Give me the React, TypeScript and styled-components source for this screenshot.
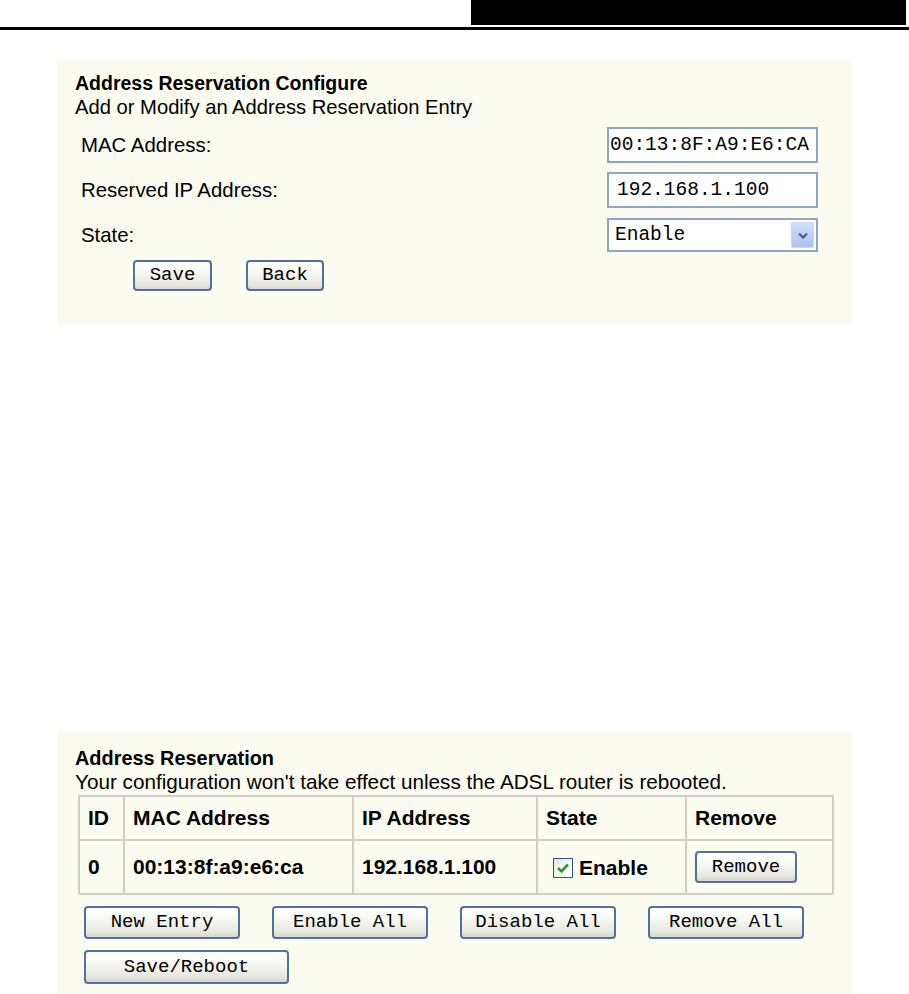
import React from "react";
import styled, { createGlobalStyle } from "styled-components";

const GlobalStyle = createGlobalStyle`
  html, body { margin: 0; padding: 0; background: #ffffff; }
  body { font-family: "Liberation Sans", Arial, sans-serif; color: #000; }
  * { box-sizing: border-box; }
`;

const CREAM = "#fbfcef";

const Header = styled.header`
  display: flex;
  justify-content: flex-end;
  height: 25px;
`;

const BlackTab = styled.div`
  width: 435px;
  margin-right: 3px;
  background: #000;
`;

const Rule = styled.div`
  height: 3px;
  margin-top: 2px;
  background: #000;
`;

const Page = styled.main`
  padding-left: 57px;
`;

const Panel = styled.section<{ $top: number; $height: number; $padTop: number }>`
  margin-top: ${(p) => p.$top}px;
  width: 795px;
  height: ${(p) => p.$height}px;
  background: ${CREAM};
  padding: ${(p) => p.$padTop}px 25px 0 18px;
`;

const Title = styled.div<{ $size?: number }>`
  font-weight: bold;
  font-size: ${(p) => p.$size ?? 19.5}px;
  line-height: 24px;
`;

const Subtitle = styled.div<{ $size?: number }>`
  font-size: ${(p) => p.$size ?? 20.2}px;
  line-height: 24px;
`;

const FormGrid = styled.div`
  display: grid;
  grid-template-columns: 1fr 211px;
  grid-auto-rows: 36px;
  row-gap: 9px;
  margin: 8px 9px 0 0;
  padding-left: 6px;
  align-items: center;
`;

const Label = styled.div`
  font-size: 20.4px;
  line-height: 24px;
`;

const TextField = styled.div<{ $pad?: number }>`
  height: 36px;
  border: 2px solid #8ca6c6;
  background: #fff;
  font-family: "Liberation Mono", "Courier New", monospace;
  font-size: 19.5px;
  line-height: 32px;
  padding-left: ${(p) => p.$pad ?? 1}px;
  white-space: nowrap;
  overflow: hidden;
`;

const SelectBox = styled.div`
  height: 34px;
  border: 2px solid #8ca6c6;
  background: #fff;
  display: flex;
  align-items: center;
  justify-content: space-between;
  padding: 0 2px 0 6px;
  font-family: "Liberation Mono", "Courier New", monospace;
  font-size: 19.5px;
`;

const ArrowBtn = styled.div`
  width: 23px;
  height: 26px;
  border-radius: 2px;
  background: linear-gradient(180deg, #d4e0fb 0%, #bccef7 55%, #aec3f2 100%);
  border: 1px solid #c6d5f8;
  display: flex;
  align-items: center;
  justify-content: center;
`;

const ButtonRow = styled.div<{ $left: number; $gap: number; $top: number }>`
  display: flex;
  gap: ${(p) => p.$gap}px;
  padding-left: ${(p) => p.$left}px;
  margin-top: ${(p) => p.$top}px;
`;

const XPButton = styled.button<{ $w: number; $h?: number }>`
  width: ${(p) => p.$w}px;
  height: ${(p) => p.$h ?? 32}px;
  border: 2px solid #50709f;
  border-radius: 4px;
  background: linear-gradient(180deg, #ffffff 0%, #f6f6f1 45%, #e6e5dc 85%, #d6d5ca 100%);
  font-family: "Liberation Mono", "Courier New", monospace;
  font-size: 19px;
  color: #000;
  padding: 0;
  line-height: 1;
`;

const Table = styled.table`
  margin-top: 1px;
  margin-left: 3px;
  width: 754px;
  border-collapse: collapse;
  table-layout: fixed;
  border-top: 2px solid #d9d9d0;
  border-left: 2px solid #d9d9d0;
  border-right: 2px solid #a9a9a2;
  border-bottom: 2px solid #a9a9a2;
`;

const Cell = styled.td<{ $h: number }>`
  height: ${(p) => p.$h}px;
  border: 2px solid #cfcfc6;
  padding: 0 0 0 8px;
  font-size: 21px;
  font-weight: bold;
  vertical-align: middle;
  white-space: nowrap;
`;

const CheckWrap = styled.span`
  display: inline-flex;
  align-items: center;
  gap: 6px;
  padding-left: 7px;
`;

const CheckBox = styled.span`
  width: 20px;
  height: 20px;
  border: 1px solid #2a5290;
  background: linear-gradient(135deg, #e4e4dc 0%, #ffffff 70%);
  display: inline-flex;
  align-items: center;
  justify-content: center;
`;

const Rows = styled.div`
  display: flex;
  flex-direction: column;
  gap: 11px;
  margin-top: 11px;
`;

export default function App() {
  const cols = [45, 229, 184, 149, 147];
  return (
    <>
      <GlobalStyle />
      <Header>
        <BlackTab />
      </Header>
      <Rule />
      <Page>
        <Panel $top={29} $height={265} $padTop={12}>
          <Title>Address Reservation Configure</Title>
          <Subtitle $size={20.2}>Add or Modify an Address Reservation Entry</Subtitle>
          <FormGrid>
            <Label>MAC Address:</Label>
            <TextField $pad={1}>00:13:8F:A9:E6:CA</TextField>
            <Label>Reserved IP Address:</Label>
            <TextField $pad={8}>192.168.1.100</TextField>
            <Label>State:</Label>
            <SelectBox>
              <span>Enable</span>
              <ArrowBtn>
                <svg width="12" height="9" viewBox="0 0 12 9">
                  <path d="M2 2.5 L6 6.5 L10 2.5" fill="none" stroke="#4d6185" strokeWidth="2.4" />
                </svg>
              </ArrowBtn>
            </SelectBox>
          </FormGrid>
          <ButtonRow $left={58} $gap={34} $top={7}>
            <XPButton $w={79} $h={31}>Save</XPButton>
            <XPButton $w={78} $h={31}>Back</XPButton>
          </ButtonRow>
        </Panel>
        <Panel $top={408} $height={262} $padTop={14}>
          <Title $size={19.9}>Address Reservation</Title>
          <Subtitle $size={20.7}>Your configuration won't take effect unless the ADSL router is rebooted.</Subtitle>
          <Table>
            <colgroup>
              {cols.map((w, i) => (
                <col key={i} style={{ width: w }} />
              ))}
            </colgroup>
            <tbody>
              <tr>
                <Cell $h={44}>ID</Cell>
                <Cell $h={44}>MAC Address</Cell>
                <Cell $h={44}>IP Address</Cell>
                <Cell $h={44}>State</Cell>
                <Cell $h={44}>Remove</Cell>
              </tr>
              <tr>
                <Cell $h={54}>0</Cell>
                <Cell $h={54}>00:13:8f:a9:e6:ca</Cell>
                <Cell $h={54}>192.168.1.100</Cell>
                <Cell $h={54}>
                  <CheckWrap>
                    <CheckBox>
                      <svg width="14" height="12" viewBox="0 0 14 12">
                        <path d="M2 6 L5.5 9.5 L12 2.5" fill="none" stroke="#21a121" strokeWidth="2.6" />
                      </svg>
                    </CheckBox>
                    Enable
                  </CheckWrap>
                </Cell>
                <Cell $h={54}>
                  <XPButton $w={102} $h={32}>Remove</XPButton>
                </Cell>
              </tr>
            </tbody>
          </Table>
          <Rows>
            <ButtonRow $left={9} $gap={32} $top={0}>
              <XPButton $w={156} $h={33}>New Entry</XPButton>
              <XPButton $w={156} $h={33}>Enable All</XPButton>
              <XPButton $w={156} $h={33}>Disable All</XPButton>
              <XPButton $w={156} $h={33}>Remove All</XPButton>
            </ButtonRow>
            <ButtonRow $left={9} $gap={32} $top={0}>
              <XPButton $w={205} $h={34}>Save/Reboot</XPButton>
            </ButtonRow>
          </Rows>
        </Panel>
      </Page>
    </>
  );
}
